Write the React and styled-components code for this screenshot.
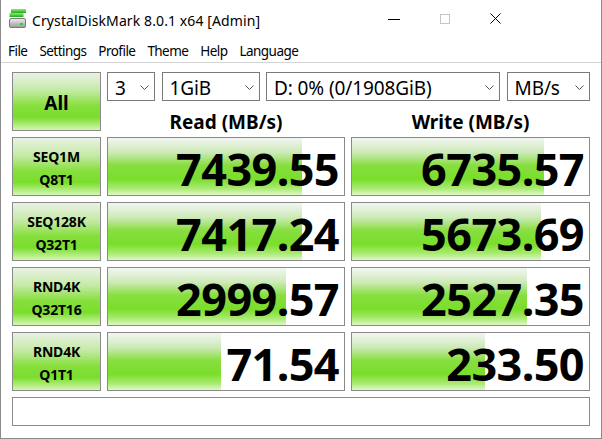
import React from 'react'
import styled, { createGlobalStyle } from 'styled-components'

const GlobalStyle = createGlobalStyle`
  html, body {
    margin: 0;
    padding: 0;
    background: #ffffff;
  }
  * {
    box-sizing: border-box;
  }
`

const combos = [
  { value: '3', width: 48 },
  { value: '1GiB', width: 98 },
  { value: 'D: 0% (0/1908GiB)', width: 234 },
  { value: 'MB/s', width: 83 },
]

const results = [
  { name: 'SEQ1M', sub: 'Q8T1', read: '7439.55', readFill: 0.82, write: '6735.57', writeFill: 0.81 },
  { name: 'SEQ128K', sub: 'Q32T1', read: '7417.24', readFill: 0.82, write: '5673.69', writeFill: 0.796 },
  { name: 'RND4K', sub: 'Q32T16', read: '2999.57', readFill: 0.755, write: '2527.35', writeFill: 0.74 },
  { name: 'RND4K', sub: 'Q1T1', read: '71.54', readFill: 0.48, write: '233.50', writeFill: 0.56 },
]

const DiskIcon = () => (
  <svg width="18" height="21" viewBox="0 0 18 21">
    <defs>
      <linearGradient id="g1" x1="0" y1="0" x2="0" y2="1">
        <stop offset="0" stopColor="#8ef06a" />
        <stop offset="1" stopColor="#1fa81f" />
      </linearGradient>
      <linearGradient id="g2" x1="0" y1="0" x2="0" y2="1">
        <stop offset="0" stopColor="#eeeeee" />
        <stop offset="1" stopColor="#9a9a9a" />
      </linearGradient>
    </defs>
    <rect x="2" y="1" width="15" height="4" fill="url(#g1)" />
    <rect x="0.5" y="5" width="14" height="4" fill="url(#g1)" />
    <rect x="0.5" y="10.5" width="16" height="9" rx="1.5" fill="url(#g2)" stroke="#7a7a7a" />
    <rect x="11" y="15" width="3" height="2" fill="#39c93a" />
  </svg>
)

const Chevron = () => (
  <svg width="9" height="5" viewBox="0 0 9 5">
    <path d="M0.5 0.5 L4.5 4.5 L8.5 0.5" fill="none" stroke="#555" strokeWidth="1" />
  </svg>
)

const App = () => {
  return (
    <>
      <GlobalStyle />
      <Window>
        <TitleBar>
          <DiskIcon />
          <Title>CrystalDiskMark 8.0.1 x64 [Admin]</Title>
          <Controls>
            <CaptionButton>
              <svg width="12" height="10" viewBox="0 0 12 10">
                <line x1="0" y1="5.5" x2="12" y2="5.5" stroke="#000" strokeWidth="1" />
              </svg>
            </CaptionButton>
            <CaptionButton>
              <svg width="10" height="10" viewBox="0 0 10 10">
                <rect x="0.5" y="0.5" width="9" height="9" fill="none" stroke="#c4c4c4" strokeWidth="1" />
              </svg>
            </CaptionButton>
            <CaptionButton>
              <svg width="11" height="11" viewBox="0 0 11 11">
                <path d="M0.5 0.5 L10.5 10.5 M10.5 0.5 L0.5 10.5" stroke="#000" strokeWidth="1" />
              </svg>
            </CaptionButton>
          </Controls>
        </TitleBar>
        <MenuBar>
          {['File', 'Settings', 'Profile', 'Theme', 'Help', 'Language'].map((m) => (
            <MenuItem key={m}>{m}</MenuItem>
          ))}
        </MenuBar>
        <Content>
          <AllButton>All</AllButton>
          <ComboRow>
            {combos.map((c) => (
              <Combo key={c.value} $width={c.width}>
                <span>{c.value}</span>
                <Chevron />
              </Combo>
            ))}
          </ComboRow>
          <Header>Read (MB/s)</Header>
          <Header>Write (MB/s)</Header>
          {results.map((r) => (
            <React.Fragment key={r.name + r.sub}>
              <TestButton>
                <span>{r.name}</span>
                <span>{r.sub}</span>
              </TestButton>
              <ResultCell>
                <Fill style={{ width: `${r.readFill * 100}%` }} />
                <Value>{r.read}</Value>
              </ResultCell>
              <ResultCell>
                <Fill style={{ width: `${r.writeFill * 100}%` }} />
                <Value>{r.write}</Value>
              </ResultCell>
            </React.Fragment>
          ))}
          <StatusBar />
        </Content>
      </Window>
    </>
  )
}

const Window = styled.div`
  width: 602px;
  height: 439px;
  background: #ffffff;
  border-left: 1px solid #8a8a8a;
  border-right: 1px solid #8a8a8a;
  border-bottom: 1px solid #8a8a8a;
  display: flex;
  flex-direction: column;
  font-family: "Noto Sans", "Open Sans", sans-serif;
  color: #000;
`

const TitleBar = styled.div`
  height: 35px;
  display: flex;
  align-items: center;
  padding-left: 8px;
  padding-top: 2px;
`

const Title = styled.div`
  flex: 1;
  margin-left: 5px;
  font-size: 14px;
  letter-spacing: 0.1px;
  padding-top: 3px;
`

const Controls = styled.div`
  display: flex;
  padding-right: 80px;
  height: 100%;
`

const CaptionButton = styled.div`
  width: 51px;
  display: flex;
  align-items: center;
  justify-content: center;
`

const MenuBar = styled.div`
  height: 28px;
  display: flex;
  align-items: center;
  padding-left: 1px;
  padding-top: 5px;
  border-bottom: 1px solid #d4d4d4;
`

const MenuItem = styled.div`
  padding: 0 6px;
  font-size: 13.5px;
  letter-spacing: -0.55px;
`

const Content = styled.div`
  flex: 1;
  display: grid;
  grid-template-columns: 89px 238px 239px;
  grid-template-rows: 29px 24px repeat(4, 59px) 29px;
  column-gap: 6px;
  row-gap: 6px;
  padding: 9px 0 0 11px;
  align-content: start;
`

const greenButton = `
  border: 1px solid #8a8a8a;
  background: linear-gradient(to bottom, #e8f2e4 0%, #c6eaa8 30%, #86df3c 58%, #7ade2c 78%, #d4f6b4 100%);
`

const AllButton = styled.div`
  ${greenButton}
  grid-row: 1 / span 2;
  display: flex;
  align-items: center;
  justify-content: center;
  font-weight: 700;
  font-size: 19px;
  padding-top: 2px;
`

const ComboRow = styled.div`
  grid-column: 2 / span 2;
  display: flex;
  gap: 6.5px;
`

const Combo = styled.div`
  width: ${(p) => p.$width}px;
  height: 29px;
  border: 1px solid #7a7a7a;
  background: #fff;
  display: flex;
  align-items: center;
  justify-content: space-between;
  padding: 2px 5px 0 7px;
  font-size: 19px;
  letter-spacing: -0.1px;
`

const Header = styled.div`
  display: flex;
  align-items: flex-end;
  justify-content: center;
  font-weight: 700;
  font-size: 19px;
  line-height: 1.2;
  margin-bottom: -3px;
`

const TestButton = styled.div`
  ${greenButton}
  display: flex;
  flex-direction: column;
  align-items: center;
  justify-content: center;
  gap: 4px;
  font-weight: 700;
  font-size: 14px;
  line-height: 19px;
  letter-spacing: -0.2px;
  padding-top: 2px;
`

const ResultCell = styled.div`
  position: relative;
  border: 1px solid #8a8a8a;
  background: #fff;
  display: flex;
  align-items: center;
  justify-content: flex-end;
  padding-right: 5px;
`

const Fill = styled.div`
  position: absolute;
  left: 0;
  top: 0;
  bottom: 0;
  background: linear-gradient(to bottom, #f2f6f2 0%, #cdeab8 25%, #88de40 48%, #7ade2a 72%, #a8ea70 88%, #ddf8c6 100%);
`

const Value = styled.div`
  position: relative;
  font-weight: 700;
  font-size: 45px;
  line-height: 52px;
  letter-spacing: -0.6px;
  padding-top: 4px;
`

const StatusBar = styled.div`
  grid-column: 1 / span 3;
  border: 1px solid #8a8a8a;
  background: #fff;
`

export default App
